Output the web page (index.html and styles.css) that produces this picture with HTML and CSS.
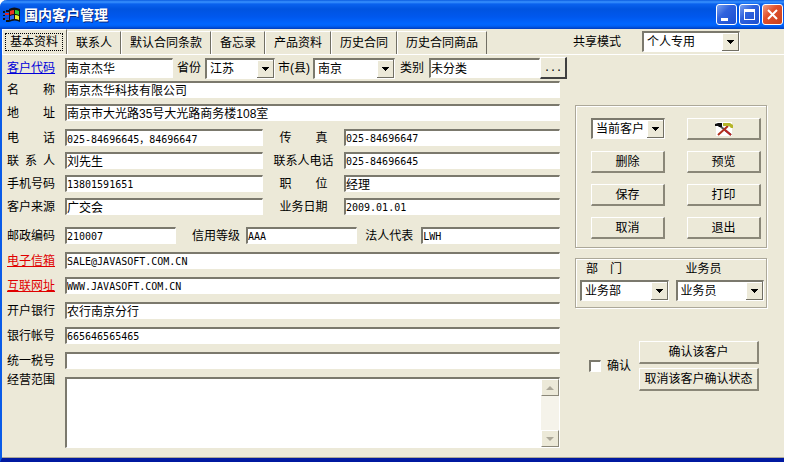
FILE: index.html
```
<!DOCTYPE html>
<html lang="zh-CN">
  <head>
    <meta charset="UTF-8" />
    <meta name="viewport" content="width=device-width, initial-scale=1.0" />
    <title>国内客户管理</title>
    <link rel="stylesheet" href="styles.css">
  </head>
  <body>
    <div class="window">
      <header class="titlebar">
        <svg class="app-icon" width="18" height="16" viewBox="0 0 18 16">
          <path d="M6 2q5-3 11 0v13q-5-3-11 0z" fill="#111" />
          <path d="M0 4h2v2H0zM3 3h3v2H3zM0 11h2v2H0zM3 13h3v2H3zM0 8h2v1H0z" fill="#111" />
          <path d="M2 6h4v2H2z" fill="#d22" />
          <path d="M2 10h4v2H2z" fill="#24c" />
          <path d="M7 4q2-1 4-1v4q-2 0-4 1z" fill="#e32" />
          <path d="M12 3q2 0 4 1v4q-2-1-4-1z" fill="#3c3" />
          <path d="M7 9q2-1 4-1v4q-2 0-4 1z" fill="#36e" />
          <path d="M12 8q2 0 4 1v4q-2-1-4-1z" fill="#ee3" />
        </svg>
        <h1>国内客户管理</h1>
        <div class="window-buttons">
          <button type="button" class="win-btn" aria-label="最小化">
            <svg width="19" height="19"><path d="M4 13h7v3H4z" fill="#fff" /></svg>
          </button>
          <button type="button" class="win-btn" aria-label="最大化">
            <svg width="19" height="19"><path d="M4 4h11v11H4zM5 7v7h9V7z" fill="#fff" fill-rule="evenodd" /></svg>
          </button>
          <button type="button" class="win-btn win-close" aria-label="关闭">
            <svg width="19" height="19"><path d="M5 5l9 9M14 5l-9 9" stroke="#fff" stroke-width="2" /></svg>
          </button>
        </div>
      </header>

      <nav class="toolbar">
        <div class="tabs">
          <button type="button" class="tab active"><span>基本资料</span></button>
          <button type="button" class="tab">联系人</button>
          <button type="button" class="tab">默认合同条款</button>
          <button type="button" class="tab">备忘录</button>
          <button type="button" class="tab">产品资料</button>
          <button type="button" class="tab">历史合同</button>
          <button type="button" class="tab">历史合同商品</button>
        </div>
        <label for="share">共享模式</label>
        <select id="share" class="share">
          <option>个人专用</option>
        </select>
      </nav>

      <main class="content">
        <form class="customer">
          <div class="row row-top">
            <a href="#code" class="name link">客户代码</a>
            <input type="text" id="code" aria-label="客户代码" value="南京杰华" />
            <label for="province">省份</label>
            <select id="province">
              <option>江苏</option>
            </select>
            <label for="city">市(县)</label>
            <select id="city">
              <option>南京</option>
            </select>
            <label for="category">类别</label>
            <input type="text" id="category" value="未分类" />
            <button type="button" class="btn more">...</button>
          </div>

          <div class="group">
            <div class="row">
              <label class="name" for="fullname">名　　称</label>
              <input type="text" id="fullname" value="南京杰华科技有限公司" />
            </div>
            <div class="row">
              <label class="name" for="address">地　　址</label>
              <input type="text" id="address" value="南京市大光路35号大光路商务楼108室" />
            </div>
          </div>

          <div class="group group-contact">
            <div class="row row-half">
              <label class="name" for="phone">电　　话</label>
              <input type="text" id="phone" class="code" value="025-84696645，84696647" />
              <label for="fax">传　　真</label>
              <input type="text" id="fax" class="code" value="025-84696647" />
            </div>
            <div class="row row-half">
              <label class="name" for="contact">联 系 人</label>
              <input type="text" id="contact" value="刘先生" />
              <label for="contactPhone">联系人电话</label>
              <input type="text" id="contactPhone" class="code" value="025-84696645" />
            </div>
            <div class="row row-half">
              <label class="name" for="mobile">手机号码</label>
              <input type="text" id="mobile" class="code" value="13801591651" />
              <label for="position">职　　位</label>
              <input type="text" id="position" value="经理" />
            </div>
            <div class="row row-half">
              <label class="name" for="source">客户来源</label>
              <input type="text" id="source" value="广交会" />
              <label for="date">业务日期</label>
              <input type="text" id="date" class="code" value="2009.01.01" />
            </div>
          </div>

          <div class="group group-account">
            <div class="row row-third">
              <label class="name" for="zip">邮政编码</label>
              <input type="text" id="zip" class="code" value="210007" />
              <label class="end" for="credit">信用等级</label>
              <input type="text" id="credit" class="code" value="AAA" />
              <label for="legal">法人代表</label>
              <input type="text" id="legal" class="code" value="LWH" />
            </div>
            <div class="row">
              <a href="#email" class="name link red">电子信箱</a>
              <input type="text" id="email" class="code" aria-label="电子信箱" value="SALE@JAVASOFT.COM.CN" />
            </div>
            <div class="row">
              <a href="#website" class="name link red">互联网址</a>
              <input type="text" id="website" class="code" aria-label="互联网址" value="WWW.JAVASOFT.COM.CN" />
            </div>
            <div class="row">
              <label class="name" for="bank">开户银行</label>
              <input type="text" id="bank" value="农行南京分行" />
            </div>
            <div class="row">
              <label class="name" for="account">银行帐号</label>
              <input type="text" id="account" class="code" value="665646565465" />
            </div>
            <div class="row">
              <label class="name" for="tax">统一税号</label>
              <input type="text" id="tax" class="code" value="" />
            </div>
            <div class="row row-memo">
              <label class="name" for="scope">经营范围</label>
              <div class="memo">
                <textarea id="scope"></textarea>
                <div class="scrollbar">
                  <button type="button" class="scroll-btn" aria-label="向上">
                    <svg width="8" height="4"><path d="M0 4h8L4 0z" fill="#aca899" /></svg>
                  </button>
                  <button type="button" class="scroll-btn" aria-label="向下">
                    <svg width="8" height="4"><path d="M0 0h8L4 4z" fill="#aca899" /></svg>
                  </button>
                </div>
              </div>
            </div>
          </div>
        </form>

        <aside class="side">
          <div class="box actions">
            <select class="scope" aria-label="范围">
              <option>当前客户</option>
            </select>
            <button type="button" class="btn" aria-label="工具">
              <svg width="20" height="14" viewBox="0 0 20 14">
                <path d="M2 0h16v14H2z" fill="#fff" />
                <path d="M6 4l11 9" stroke="#555" stroke-width="2" />
                <path d="M11 8l6 5" stroke="#b22" stroke-width="2" />
                <path d="M14 4l-10 9" stroke="#b0301c" stroke-width="2" />
                <path d="M1 2l3-1h4v4H5L4 4H1z" fill="#111" />
                <path d="M9 1h7l3 2v3h-2l-2-2H9z" fill="#b5b52a" />
              </svg>
            </button>
            <button type="button" class="btn">删除</button>
            <button type="button" class="btn">预览</button>
            <button type="button" class="btn">保存</button>
            <button type="button" class="btn">打印</button>
            <button type="button" class="btn">取消</button>
            <button type="button" class="btn">退出</button>
          </div>

          <div class="box owner">
            <label for="dept">部　门</label>
            <label for="staff">业务员</label>
            <select id="dept">
              <option>业务部</option>
            </select>
            <select id="staff">
              <option>业务员</option>
            </select>
          </div>

          <div class="confirm">
            <label class="check"><input type="checkbox" />确认</label>
            <div class="confirm-buttons">
              <button type="button" class="btn">确认该客户</button>
              <button type="button" class="btn">取消该客户确认状态</button>
            </div>
          </div>
        </aside>
      </main>
    </div>
  </body>
</html>
```
FILE: styles.css
```
* {
  box-sizing: border-box;
}
body {
  margin: 0;
  background: #fff;
  color: #000;
  font-family: "Liberation Sans", "Noto Sans CJK SC", sans-serif;
  font-size: 12px;
  line-height: 14px;
}
input,
select,
textarea,
button {
  margin: 0;
  font: inherit;
  color: inherit;
  border-radius: 0;
}
.window {
  display: flex;
  flex-direction: column;
  min-height: 100vh;
  margin-right: 7px;
  background: #ece9d8;
  border-left: 2px solid #0a5be8;
  border-bottom: 4px solid #0019a0;
  border-radius: 7px 0 0 0;
}

/* title bar */
.titlebar {
  display: flex;
  align-items: center;
  height: 29px;
  margin-left: -2px;
  padding: 0 1px 0 3px;
  border-radius: 7px 0 0 0;
  background: linear-gradient(
    #0a5be0 0,
    #3a93ff 2px,
    #0a62ee 4px,
    #0054e0 9px,
    #0058ee 17px,
    #0066ff 24px,
    #0060f5 26px,
    #003dbd 29px
  );
}
.app-icon {
  flex: none;
}
.titlebar h1 {
  flex: 1;
  margin: 0 0 0 3px;
  color: #fff;
  font-size: 14px;
  line-height: 18px;
  text-shadow: 1px 1px #0a2a80;
}
.window-buttons {
  display: flex;
  gap: 2px;
}
.win-btn {
  width: 21px;
  height: 21px;
  padding: 0;
  border: 1px solid #fff;
  border-radius: 3px;
  background: linear-gradient(135deg, #7ba2f0, #2f62dd 40%, #1c4fd0);
}
.win-btn svg {
  display: block;
}
.win-close {
  background: linear-gradient(135deg, #f0a088, #e0502c 40%, #c8401c);
}

/* tabs */
.toolbar {
  display: flex;
  align-items: center;
  height: 26px;
  padding: 0 44px 0 0;
  border-bottom: 1px solid #fff;
}
.tabs {
  display: flex;
  flex: 1;
  align-self: stretch;
  padding-top: 2px;
}
.tab {
  padding: 0 8px;
  border: solid;
  border-width: 1px 1px 0 1px;
  border-color: #fff #716f64 #fff #fff;
  background: #ece9d8;
  white-space: nowrap;
}
.tab.active {
  padding: 0 3px 0 2px;
  margin-top: -2px;
}
.tab.active span {
  display: block;
  padding: 1px 4px;
  border: 1px dotted #000;
}
.share {
  margin-left: 21px;
}

/* fields */
input[type="text"],
select,
.memo {
  width: 100%;
  min-width: 0;
  border: solid;
  border-width: 2px 1px 1px 2px;
  border-color: #7b796d #fff #fff #7b796d;
  background: #fff;
  outline: none;
}
input[type="text"] {
  height: 17px;
  padding: 0 0 2px;
}
input.code {
  padding: 0;
  font-family: "DejaVu Sans Mono", "Noto Sans CJK SC", monospace;
  font-size: 10px;
}
select {
  height: 21px;
  padding: 0 18px 0 3px;
  appearance: none;
  background: #fff
    url("data:image/svg+xml,%3Csvg xmlns='http://www.w3.org/2000/svg' width='17' height='18'%3E%3Cpath d='M0 0h17v18H0z' fill='%23716f64'/%3E%3Cpath d='M0 0h16v17H0z' fill='%23fff'/%3E%3Cpath d='M1 1h15v16H1z' fill='%23ece9d8'/%3E%3Cpath d='M5 7h7v1H5zM6 8h5v1H6zM7 9h3v1H7zM8 10h1v1H8z'/%3E%3C/svg%3E")
    no-repeat right center;
}
select.share {
  width: 98px;
}

/* raised button */
.btn {
  height: 22px;
  padding: 0;
  border: solid;
  border-width: 1px 2px 2px 1px;
  border-color: #fff #8a8778 #8a8778 #fff;
  background: #ece9d8;
  white-space: nowrap;
}
.btn svg {
  display: block;
  margin: 0 auto;
}

.content {
  display: flex;
  flex: 1;
  padding: 2px 17px 9px 2px;
  border-bottom: 1px solid #aca899;
}
.customer {
  flex: 1;
  min-width: 0;
}
.row {
  display: grid;
  grid-template-columns: 61px 1fr;
  align-items: center;
}
.row label {
  text-align: center;
  white-space: nowrap;
}
.row .name {
  width: 48px;
  margin-left: 3px;
  text-align: left;
  text-align-last: justify;
}
.row .end {
  padding-right: 6px;
  text-align: right;
}
.link {
  color: #0000d8;
}
.link.red {
  color: #e00000;
}
.row-top {
  grid-template-columns: 61px 36fr 32px 70px 38px 82px 34px 37fr 27px;
}
.row-top input[type="text"] {
  height: 20px;
}
.row-top .more {
  border-color: #fff #404040 #404040 #fff;
  font-family: "DejaVu Sans Mono", monospace;
  font-size: 10px;
}
.row-half {
  grid-template-columns: 61px 11fr 81px 12fr;
}
.row-third {
  grid-template-columns: 61px 4fr 70px 4fr 64px 5fr;
}
.group {
  display: flex;
  flex-direction: column;
  gap: 6px;
  margin: 2px 7px 0 0;
}
.group-contact {
  margin-top: 8px;
}
.group-account {
  gap: 8px;
  margin-top: 12px;
}
.row-memo {
  align-items: start;
}
.row-memo .name {
  margin-top: -4px;
}
.memo {
  display: flex;
  height: 71px;
}
.memo textarea {
  flex: 1;
  padding: 1px;
  border: 0;
  outline: none;
  resize: none;
  background: transparent;
}
.scrollbar {
  display: flex;
  flex-direction: column;
  justify-content: space-between;
  width: 18px;
  background: #f5f3ea;
}
.scroll-btn {
  height: 17px;
  padding: 0 4px;
  border: 1px solid;
  border-color: #fff #8a8778 #8a8778 #fff;
  background: #ece9d8;
}
.scroll-btn svg {
  display: block;
}

/* right column */
.side {
  width: 192px;
  margin: 48px 0 0 8px;
}
.box {
  display: grid;
  border: 1px solid #aca899;
  box-shadow: 1px 1px #fff, inset 1px 1px #fff;
}
.actions {
  grid-template-columns: 74px 74px;
  justify-content: space-between;
  gap: 11px;
  padding: 12px 5px 8px 15px;
}
.owner {
  grid-template-columns: 1fr 1fr;
  gap: 4px 7px;
  margin-top: 10px;
  padding: 3px 2px 6px 4px;
}
.owner label {
  padding-left: 6px;
}
.owner label + label {
  padding-left: 10px;
}
.confirm {
  display: flex;
  align-items: center;
  gap: 8px;
  margin: 33px 8px 0 14px;
}
.check {
  display: flex;
  align-items: center;
  gap: 6px;
  white-space: nowrap;
}
.check input {
  width: 12px;
  height: 12px;
  appearance: none;
  border: solid;
  border-width: 2px 1px 1px 2px;
  border-color: #7b796d #fff #fff #7b796d;
  background: #fff;
}
.check input:checked {
  background: #404040;
}
.confirm-buttons {
  display: flex;
  flex: 1;
  flex-direction: column;
  gap: 4px;
}
.confirm-buttons .btn {
  height: 23px;
}
```
